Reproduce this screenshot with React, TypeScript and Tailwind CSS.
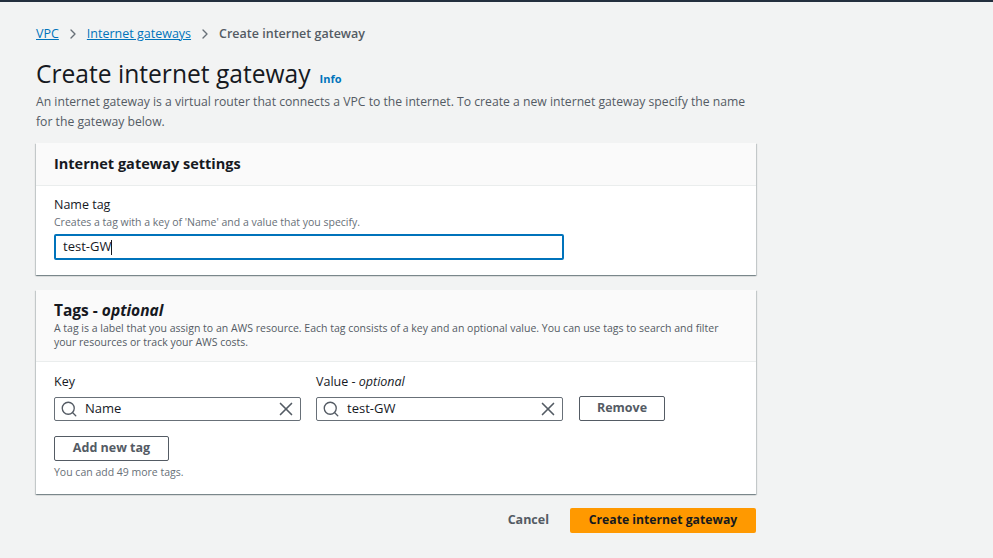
import { Search, X, ChevronRight } from 'lucide-react';

const cardShadow =
  'shadow-[0_1px_1px_0_rgba(0,28,36,0.3),1px_1px_1px_0_rgba(0,28,36,0.15),-1px_1px_1px_0_rgba(0,28,36,0.15)]';

function TagInput({ value }: { value: string }) {
  return (
    <div className="flex items-center h-[24px] w-[247px] border border-[#687078] rounded-[2px] bg-white pl-[5px] pr-[3px]">
      <Search size={18} strokeWidth={1.8} className="text-[#545b64] shrink-0" />
      <span className="ml-[7px] flex-1 text-[13px] text-[#16191f]">{value}</span>
      <X size={22} strokeWidth={1.8} className="text-[#545b64] shrink-0" />
    </div>
  );
}

export default function App() {
  return (
    <div
      className="min-h-[558px] w-[993px] bg-[#f2f3f3] border-t-2 border-[#232f3e] text-[#16191f]"
      style={{ fontFamily: '"Open Sans", "Noto Sans", sans-serif' }}
    >
      <div className="pl-[36px] w-[756px] pt-[23px]">
        {/* Breadcrumbs */}
        <nav className="flex items-center text-[12.5px] h-[18px]">
          <a className="text-[#0073bb] underline">VPC</a>
          <ChevronRight size={16} strokeWidth={2} className="text-[#687078] mx-[6px]" />
          <a className="text-[#0073bb] underline">Internet gateways</a>
          <ChevronRight size={16} strokeWidth={2} className="text-[#687078] mx-[6px]" />
          <span className="text-[#545b64] font-semibold">Create internet gateway</span>
        </nav>

        {/* Heading */}
        <div className="mt-[15px] flex items-baseline">
          <h1 className="text-[24.6px] leading-[32px] font-normal text-[#16191f]">
            Create internet gateway
          </h1>
          <span className="ml-[9px] text-[11px] font-bold text-[#0073bb]">Info</span>
        </div>
        <p className="mt-[2px] text-[12.2px] leading-[20px] text-[#545b64]">
          An internet gateway is a virtual router that connects a VPC to the internet. To create a
          new internet gateway specify the name for the gateway below.
        </p>

        {/* Settings card */}
        <section className={`mt-[11px] bg-white ${cardShadow}`}>
          <div className="h-[43px] bg-[#fafafa] border-b border-[#eaeded] px-[18px] flex items-center">
            <h2 className="text-[14.5px] font-bold text-[#16191f]">Internet gateway settings</h2>
          </div>
          <div className="px-[18px] pt-[10px] pb-[15px]">
            <div className="text-[12.5px] leading-[18px]">Name tag</div>
            <div className="text-[10.5px] leading-[16px] text-[#687078]">
              Creates a tag with a key of 'Name' and a value that you specify.
            </div>
            <div className="mt-[4px] h-[26px] w-[510px] border-2 border-[#0073bb] rounded-[2px] flex items-center px-[7px] text-[13px]">
              test-GW<span className="w-px h-[15px] bg-[#16191f]" />
            </div>
          </div>
        </section>

        {/* Tags card */}
        <section className={`mt-[15px] bg-white ${cardShadow}`}>
          <div className="bg-[#fafafa] border-b border-[#eaeded] px-[18px] pt-[9px] pb-[12px]">
            <h2 className="text-[15.5px] leading-[22px] font-bold text-[#16191f]">
              Tags - <i className="font-bold">optional</i>
            </h2>
            <p className="text-[10.5px] leading-[14px] text-[#545b64]">
              A tag is a label that you assign to an AWS resource. Each tag consists of a key and an
              optional value. You can use tags to search and filter your resources or track your AWS
              costs.
            </p>
          </div>
          <div className="px-[18px] pt-[11px] pb-[15px]">
            <div className="flex items-end gap-[15px]">
              <div>
                <div className="text-[12.5px] leading-[18px] mb-[6px]">Key</div>
                <TagInput value="Name" />
              </div>
              <div>
                <div className="text-[12.5px] leading-[18px] mb-[6px]">
                  Value - <i>optional</i>
                </div>
                <TagInput value="test-GW" />
              </div>
              <button className="ml-[1px] h-[25px] w-[86px] border border-[#545b64] rounded-[2px] text-[12.5px] font-bold text-[#545b64] bg-white">
                Remove
              </button>
            </div>
            <button className="mt-[15px] h-[25px] w-[115px] border border-[#545b64] rounded-[2px] text-[12.5px] font-bold text-[#545b64] bg-white">
              Add new tag
            </button>
            <div className="mt-[4px] text-[10.5px] leading-[14px] text-[#687078]">
              You can add 49 more tags.
            </div>
          </div>
        </section>

        {/* Actions */}
        <div className="mt-[14px] flex items-center justify-end">
          <button className="text-[12.5px] font-bold text-[#545b64] mr-[19px] px-[2px]">Cancel</button>
          <button className="h-[25px] w-[186px] bg-[#ff9900] rounded-[2px] text-[12.2px] font-bold text-[#16191f]">
            Create internet gateway
          </button>
        </div>
      </div>
    </div>
  );
}
